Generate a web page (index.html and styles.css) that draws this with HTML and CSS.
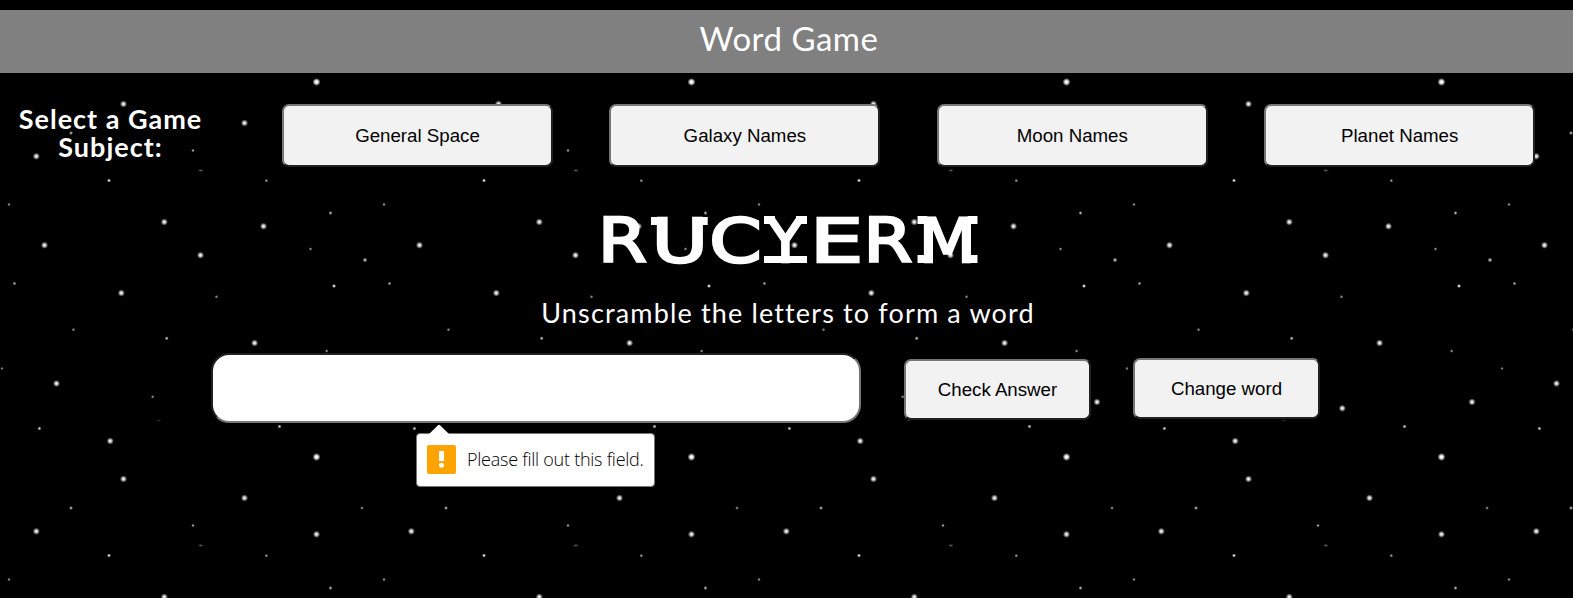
FILE: index.html
```html
<!DOCTYPE html>
<html lang="en">
<head>
<meta charset="utf-8">
<title>Word Game</title>
<link rel="stylesheet" href="styles.css">
</head>
<body>
<header class="banner"><span>Word Game</span></header>
<nav class="subjects">
  <h2 class="prompt">Select a Game<br>Subject:</h2>
  <div class="choices">
    <button class="btn">General Space</button>
    <button class="btn">Galaxy Names</button>
    <button class="btn">Moon Names</button>
    <button class="btn">Planet Names</button>
  </div>
</nav>
<main>
  <h1 class="scramble"><span class="r">R</span><span class="u">U</span><span class="c">C</span><span class="y">Y</span><span class="e">E</span><span class="r r2">R</span><span class="m">M</span></h1>
  <p class="hint"><span>Unscramble the letters to form a word</span></p>
  <form class="answer">
    <div class="field">
      <input type="text" class="guess" aria-label="Answer">
      <div class="bubble">
        <svg class="arrow" width="22" height="11" viewBox="0 0 22 11"><path d="M0 11L10 1.2Q11 .2 12 1.2L22 11Z" fill="#fff"/></svg>
        <svg width="29" height="29" viewBox="0 0 29 29"><rect width="29" height="29" rx="2" fill="#ffa300"/><rect x="12" y="6" width="5" height="10" fill="#fff"/><circle cx="14.5" cy="20.3" r="2.5" fill="#fff"/></svg>
        <span>Please fill out this field.</span>
      </div>
    </div>
    <button type="button" class="btn check">Check Answer</button>
    <button type="button" class="btn change">Change word</button>
  </form>
</main>
</body>
</html>
```
FILE: styles.css
```css
* { box-sizing: border-box; }

body {
  margin: 0;
  height: 598px;
  overflow: hidden;
  color: #fff;
  font-family: Lato, "Open Sans", sans-serif;
  background-color: #000;
  /* large stars, then small ones, on a repeating 375px tile */
  background-image:
    radial-gradient(circle at 316.5px 82px, #fff 1px, #bbb 2px, transparent 4px),
    radial-gradient(circle at 123.5px 104px, #eee 0.8px, #888 2px, transparent 3.6px),
    radial-gradient(circle at 244.5px 123px, #eee 0.8px, #888 2px, transparent 3.6px),
    radial-gradient(circle at 36.3px 156.3px, #eee 0.8px, #888 2px, transparent 3.6px),
    radial-gradient(circle at 164.3px 222px, #eee 0.8px, #888 2px, transparent 3.6px),
    radial-gradient(circle at 263.5px 226.3px, #eee 0.8px, #888 2px, transparent 3.6px),
    radial-gradient(circle at 44.5px 245.2px, #eee 0.8px, #888 2px, transparent 3.6px),
    radial-gradient(circle at 200.5px 255.2px, #eee 0.8px, #888 2px, transparent 3.6px),
    radial-gradient(circle at 121.3px 293px, #eee 0.8px, #888 2px, transparent 3.6px),
    radial-gradient(circle at 254.6px 343px, #eee 0.8px, #888 2px, transparent 3.6px),
    radial-gradient(circle at 56.5px 8.5px, #eee 0.8px, #888 2px, transparent 3.6px),
    radial-gradient(circle at 110.2px 66px, #eee 0.8px, #888 2px, transparent 3.6px),
    radial-gradient(circle at 316.5px 159.3px, #eee 0.8px, #888 2px, transparent 3.6px),
    radial-gradient(circle at 347px 27px, #eee 0.8px, #888 2px, transparent 3.6px),
    radial-gradient(circle at 217.3px 33.3px, #eee 0.8px, #888 2px, transparent 3.6px),
    radial-gradient(circle at 71px 133px, #aaa 0.5px, transparent 2px),
    radial-gradient(circle at 193px 150.5px, #999 0.5px, transparent 1.8px),
    radial-gradient(ellipse 3px 1.5px at 200.8px 170.5px, #666, transparent),
    radial-gradient(circle at 109px 180.5px, #ddd 0.5px, transparent 2px),
    radial-gradient(circle at 266.3px 180.7px, #999 0.5px, transparent 1.8px),
    radial-gradient(circle at 9px 204.5px, #888 0.5px, transparent 1.8px),
    radial-gradient(circle at 330.5px 213px, #aaa 0.5px, transparent 2px),
    radial-gradient(circle at 310.5px 249px, #888 0.5px, transparent 1.8px),
    radial-gradient(circle at 365px 260px, #bbb 0.5px, transparent 2.4px),
    radial-gradient(circle at 334px 286px, #eee 0.5px, transparent 2px),
    radial-gradient(circle at 14.5px 283.5px, #aaa 0.5px, transparent 1.8px),
    radial-gradient(circle at 216.5px 296.8px, #888 0.5px, transparent 1.8px),
    radial-gradient(circle at 73.5px 329.7px, #888 0.5px, transparent 1.8px),
    radial-gradient(circle at 166.7px 338.3px, #bbb 0.5px, transparent 2px),
    radial-gradient(circle at 326.7px 351px, #888 0.5px, transparent 1.8px),
    radial-gradient(circle at 2px 368.5px, #777 0.5px, transparent 1.8px),
    radial-gradient(circle at 152.7px 21.8px, #888 0.5px, transparent 1.8px),
    radial-gradient(circle at 39.4px 53.5px, #ccc 0.5px, transparent 2px),
    radial-gradient(circle at 279.5px 51.5px, #ccc 0.5px, transparent 2px),
    radial-gradient(circle at 362px 133px, #888 0.5px, transparent 1.8px),
    radial-gradient(ellipse 3px 1.2px at 158.7px 45.5px, #333, transparent);
  background-size: 375px 375px;
}

.banner {
  height: 73px;
  border-top: 10px solid #000;
  background: #808080;
  display: flex;
  justify-content: center;
  font-size: 33px;
  line-height: 56px;
  letter-spacing: 0.5px;
  padding-left: 5px;
}

.subjects {
  display: flex;
  align-items: flex-start;
  padding-top: 31px;
}

.prompt {
  width: 221px;
  margin: 1px 0 0;
  text-align: center;
  font-size: 27px;
  font-weight: 700;
  line-height: 28px;
  letter-spacing: 1px;
}

.choices {
  display: grid;
  grid-template-columns: repeat(4, 271px);
  column-gap: 56.4px;
  margin-left: 61px;
}

.btn {
  height: 63px;
  padding: 0;
  border: 2px solid;
  border-color: #767676 #212121 #212121 #767676;
  border-radius: 7px;
  background: #f2f2f2;
  color: #000;
  font: 18.7px "Liberation Sans", Arial, sans-serif;
}

.scramble {
  display: flex;
  justify-content: center;
  margin: 37px 0 0;
  padding-left: 4px;
  height: 74px;
  font: 400 61px/74px "DejaVu Sans", sans-serif;
  -webkit-text-stroke: 2.5px #fff;
}

.scramble span {
  display: flex;
  justify-content: center;
  background-repeat: no-repeat;
}

.scramble .r { width: 51px; transform: scaleX(1.15); }
.scramble .r2 { width: 54px; }
.scramble .c { width: 47px; transform: scaleX(1.23); }
.scramble .e { width: 49px; transform: scaleX(1.38); }

/* slab serifs on U, Y and M */
.scramble .u {
  width: 64px;
  transform: scaleX(1.26);
  background-image: linear-gradient(#fff, #fff), linear-gradient(#fff, #fff);
  background-size: 8px 8px;
  background-position: 9px 13px, 46px 13px;
}
.scramble .y {
  width: 53px;
  background-image: linear-gradient(#fff, #fff), linear-gradient(#fff, #fff), linear-gradient(#fff, #fff);
  background-size: 11px 8px, 11px 8px, 43px 7px;
  background-position: 5px 12px, 37px 12px, 5px 52px;
}
.scramble .m {
  width: 65px;
  transform: scaleX(1.09);
  background-image: linear-gradient(#fff, #fff), linear-gradient(#fff, #fff), linear-gradient(#fff, #fff), linear-gradient(#fff, #fff);
  background-size: 9px 8px;
  background-position: 5px 12px, 51px 12px, 5px 51px, 51px 51px;
}

.hint {
  margin: 15px 0 0;
  text-align: center;
  font-size: 27px;
  line-height: 40px;
  letter-spacing: 1.15px;
  padding-left: 3px;
}

.answer {
  display: flex;
  align-items: flex-start;
  margin: 20px 0 0 211px;
}

.field { position: relative; }

.guess {
  display: block;
  width: 650px;
  height: 70px;
  border: 2px solid;
  border-color: #212121 #767676 #767676 #212121;
  border-radius: 18px;
  background: #fff;
}

.check { width: 187px; height: 61px; margin: 6px 0 0 43px; }
.change { width: 187px; height: 61px; margin: 5px 0 0 42px; }

.bubble {
  position: absolute;
  left: 205px;
  top: 80px;
  width: 239px;
  height: 54px;
  padding: 0 0 2px 10px;
  display: flex;
  align-items: center;
  gap: 11px;
  border: 1px solid #767676;
  border-radius: 4px;
  background: #fff;
  color: #000;
  font: 300 18px "Open Sans", "Noto Sans", sans-serif;
  letter-spacing: -0.25px;
  white-space: nowrap;
}

.arrow {
  position: absolute;
  left: 11px;
  top: -10px;
}
```
